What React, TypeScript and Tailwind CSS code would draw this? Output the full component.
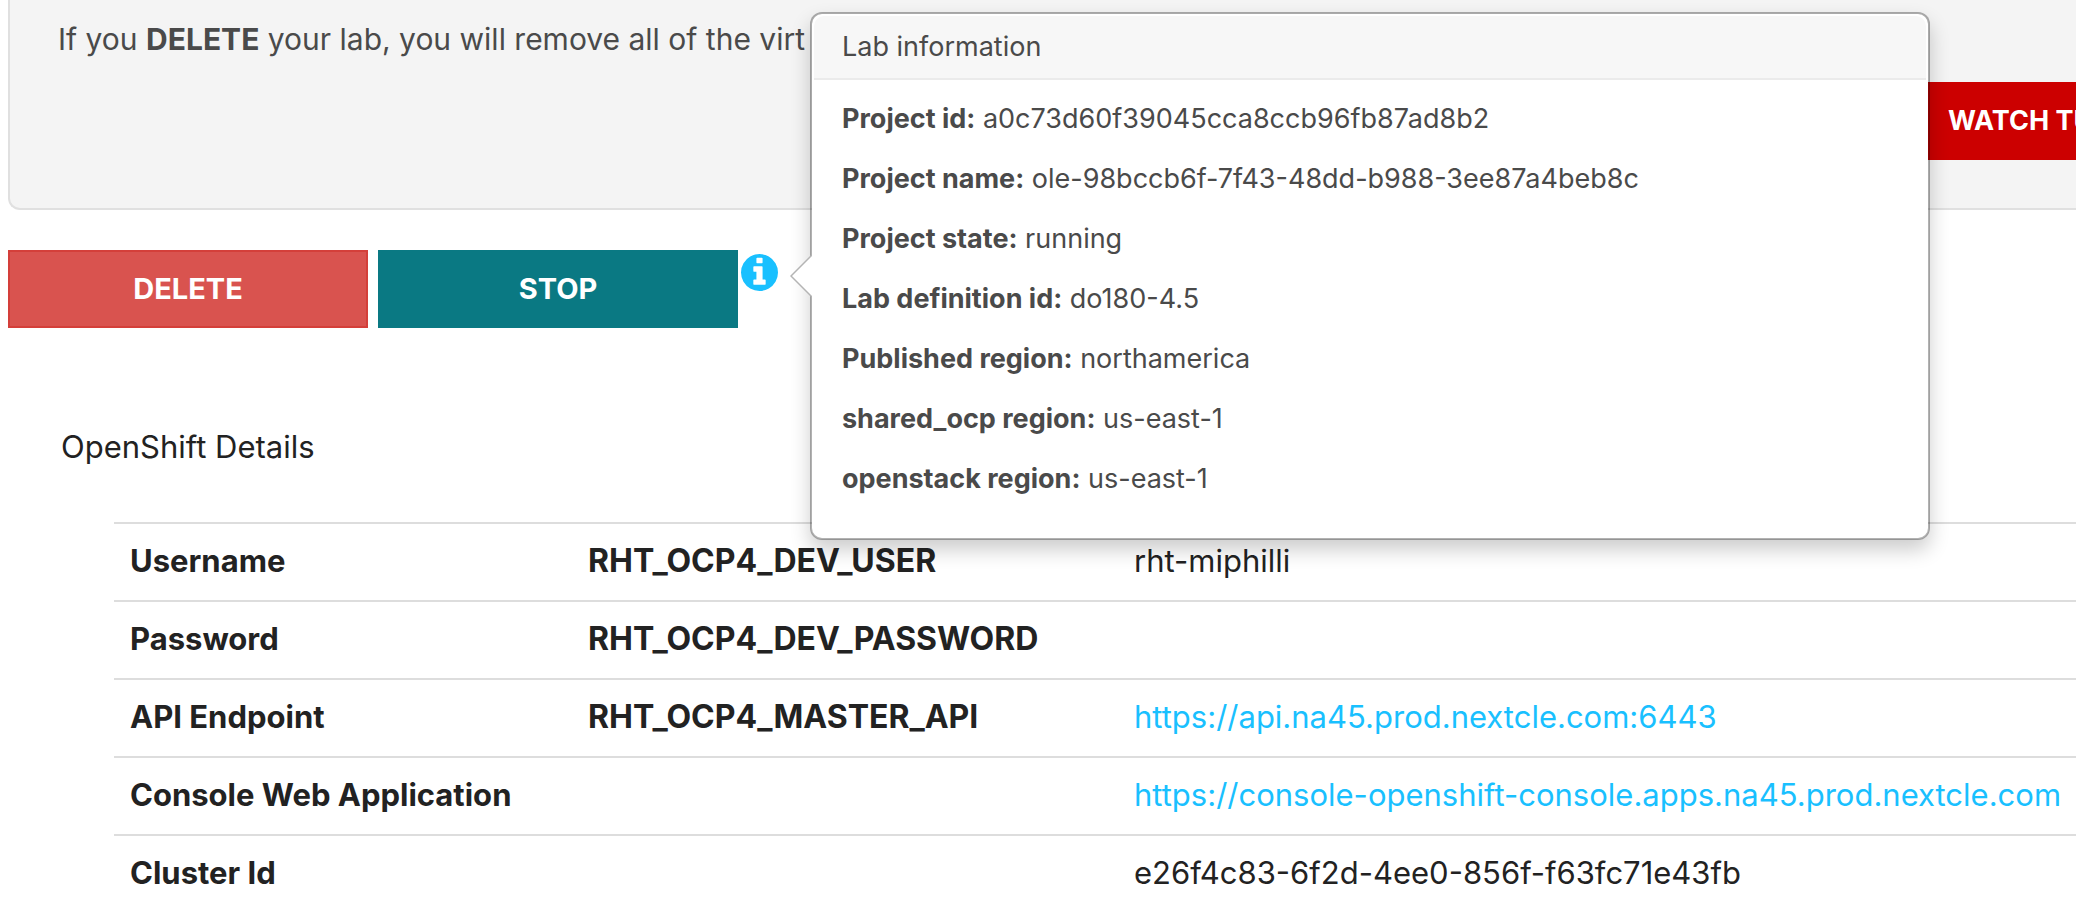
const labInfo = [
  { label: "Project id:", value: "a0c73d60f39045cca8ccb96fb87ad8b2" },
  { label: "Project name:", value: "ole-98bccb6f-7f43-48dd-b988-3ee87a4beb8c" },
  { label: "Project state:", value: "running" },
  { label: "Lab definition id:", value: "do180-4.5" },
  { label: "Published region:", value: "northamerica" },
  { label: "shared_ocp region:", value: "us-east-1" },
  { label: "openstack region:", value: "us-east-1" },
];

const details = [
  { name: "Username", variable: "RHT_OCP4_DEV_USER", value: "rht-miphilli" },
  { name: "Password", variable: "RHT_OCP4_DEV_PASSWORD", value: "" },
  { name: "API Endpoint", variable: "RHT_OCP4_MASTER_API", value: "https://api.na45.prod.nextcle.com:6443" },
  { name: "Console Web Application", variable: "", value: "https://console-openshift-console.apps.na45.prod.nextcle.com" },
  { name: "Cluster Id", variable: "", value: "e26f4c83-6f2d-4ee0-856f-f63fc71e43fb" },
];

export default function App() {
  return (
    <main className="h-screen overflow-hidden bg-white pl-2 font-['Inter',sans-serif] text-[31px] leading-[46px] text-[#222]">
      <section className="flex h-[210px] flex-col rounded-bl-xl border-b-2 border-l-2 border-[#e0e0e0] bg-[#f4f4f4] pt-4 pl-12 text-[#4a4a4a]">
        <p className="text-[30px] whitespace-nowrap">
          If you <strong>DELETE</strong> your lab, you will remove all of the virt
        </p>
        <div className="mt-5 -mr-20 flex justify-end">
          <button className="h-[78px] w-[234px] shrink-0 bg-[#c00] pl-[26px] text-left text-[27px] font-bold whitespace-nowrap text-white">
            WATCH TUTORIAL
          </button>
        </div>
      </section>

      <div className="mt-10 flex items-start">
        <button className="mr-[10px] h-[78px] w-[360px] border-2 border-[#d43f3a] bg-[#d9534f] text-[29px] font-bold text-white">DELETE</button>
        <button className="h-[78px] w-[360px] bg-[#0a7983] text-[29px] font-bold text-white">STOP</button>
        <div className="relative mt-1 ml-[3px]">
          <button aria-label="Lab information" className="block text-[#19c0ff]">
            <InfoIcon />
          </button>
          <LabPopover />
        </div>
      </div>

      <h2 className="mt-24 ml-[53px]">OpenShift Details</h2>
      <div className="mt-[52px] pl-[106px]">
        <table className="w-full table-fixed border-collapse text-left">
          <colgroup>
            <col className="w-[458px]" />
            <col className="w-[546px]" />
            <col />
          </colgroup>
          <tbody>
            {details.map((row) => (
              <tr key={row.name} className="h-[78px] border-t-2 border-[#ddd] whitespace-nowrap">
                <th scope="row" className="px-4 pb-[3px] font-bold">{row.name}</th>
                <td className="px-4 pb-[3px] text-[32px] font-bold">{row.variable}</td>
                <td className="px-4 pb-[3px]">
                  {row.value.startsWith("https") ? <a href={row.value} className="text-[#19c0ff]">{row.value}</a> : row.value}
                </td>
              </tr>
            ))}
          </tbody>
        </table>
      </div>
    </main>
  );
}

function LabPopover() {
  return (
    <div className="absolute -top-[242px] left-full z-10 ml-8 w-[1120px] rounded-xl border-2 border-black/30 bg-white bg-clip-padding p-[2px] text-[27px] leading-10 text-[#4a4a4a] shadow-[0_10px_20px_rgba(0,0,0,0.2)]">
      <svg className="absolute top-[239px] -left-[22px]" width="24" height="46" viewBox="0 0 24 46">
        <path d="M22 2 L1 23 L22 44" fill="#fff" stroke="#b4b4b4" strokeWidth="1.5" />
        <path d="M22 2H24V44H22Z" fill="#fff" />
      </svg>
      <h3 className="rounded-t-[10px] border-b-2 border-[#ebebeb] bg-[#f7f7f7] px-7 pt-[11px] pb-[11px]">Lab information</h3>
      <div className="px-7 pt-[19px] pb-[17px]">
        {labInfo.map((item) => (
          <p key={item.label} className="mb-5 whitespace-nowrap">
            <strong>{item.label}</strong> {item.value}
          </p>
        ))}
      </div>
    </div>
  );
}

function InfoIcon() {
  return (
    <svg width="37" height="37" viewBox="128 128 1536 1536" fill="currentColor" aria-hidden="true">
      <path d="M1152 1376v-160q0-14-9-23t-23-9h-96v-512q0-14-9-23t-23-9h-320q-14 0-23 9t-9 23v160q0 14 9 23t23 9h96v320h-96q-14 0-23 9t-9 23v160q0 14 9 23t23 9h448q14 0 23-9t9-23zm-128-896v-160q0-14-9-23t-23-9h-192q-14 0-23 9t-9 23v160q0 14 9 23t23 9h192q14 0 23-9t9-23zm640 416q0 209-103 385.5t-279.5 279.5-385.5 103-385.5-103-279.5-279.5-103-385.5 103-385.5 279.5-279.5 385.5-103 385.5 103 279.5 279.5 103 385.5z" />
    </svg>
  );
}
